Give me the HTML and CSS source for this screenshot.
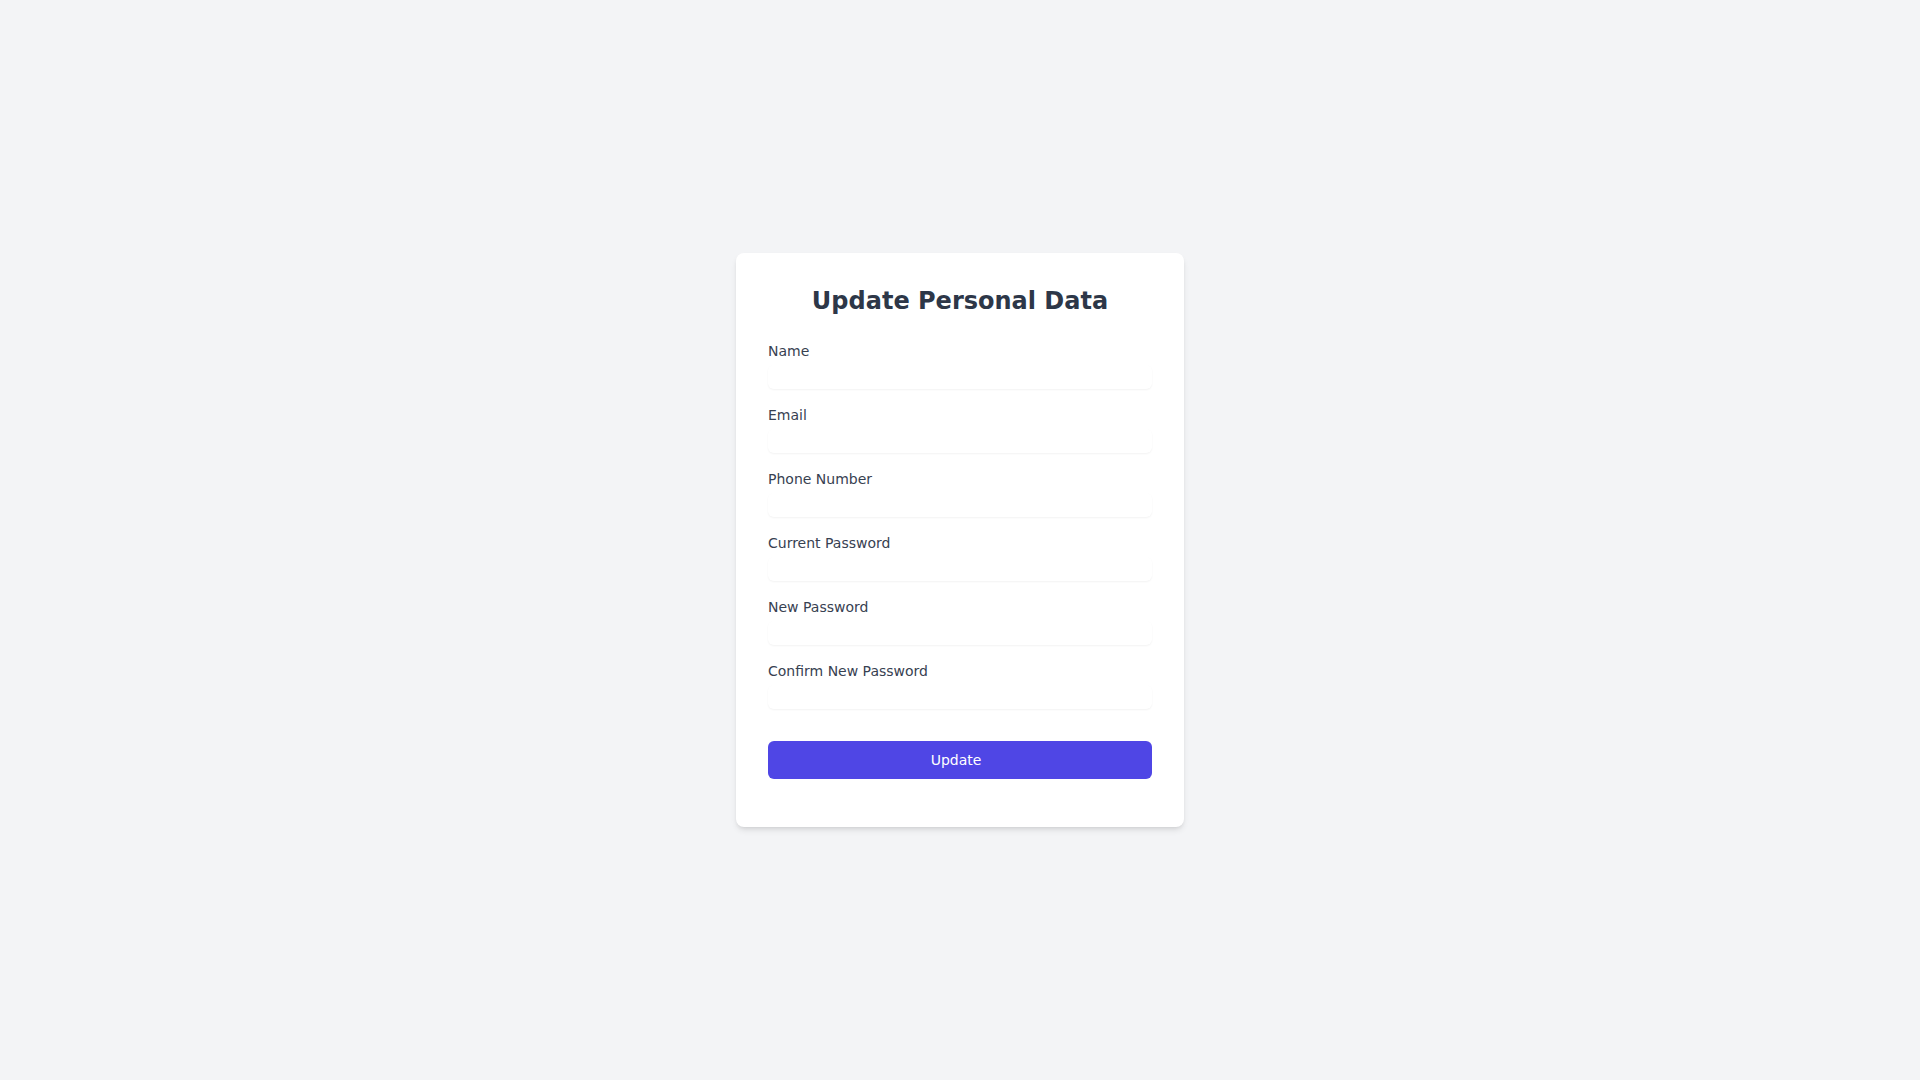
FILE: index.html
```html
<!DOCTYPE html>
<html lang="en">
<head>
<meta charset="utf-8">
<title>Update Personal Data</title>
<link rel="stylesheet" href="styles.css">
</head>
<body>
<main class="page">
  <form class="card">
    <h1 class="title">Update Personal Data</h1>
    <div class="field">
      <label class="label" for="name">Name</label>
      <input class="input" id="name" type="text">
    </div>
    <div class="field">
      <label class="label" for="email">Email</label>
      <input class="input" id="email" type="email">
    </div>
    <div class="field">
      <label class="label" for="phone">Phone Number</label>
      <input class="input" id="phone" type="tel">
    </div>
    <div class="field">
      <label class="label" for="cur">Current Password</label>
      <input class="input" id="cur" type="password">
    </div>
    <div class="field">
      <label class="label" for="new">New Password</label>
      <input class="input" id="new" type="password">
    </div>
    <div class="field">
      <label class="label" for="conf">Confirm New Password</label>
      <input class="input" id="conf" type="password">
    </div>
    <div class="actions">
      <button class="button" type="button">Update</button>
    </div>
  </form>
</main>
</body>
</html>
```
FILE: styles.css
```css
* { box-sizing: border-box; }
html, body { margin: 0; padding: 0; }
body {
  font-family: "DejaVu Sans", sans-serif;
  background: #f3f4f6;
  line-height: 1.5;
}
.page {
  min-height: 100vh;
  display: flex;
  align-items: center;
  justify-content: center;
}
.card {
  width: 448px;
  background: #ffffff;
  border-radius: 8px;
  box-shadow: 0 4px 6px -1px rgba(0,0,0,0.1), 0 2px 4px -2px rgba(0,0,0,0.1);
  padding: 32px;
}
.title {
  margin: 0 0 24px;
  font-size: 24px;
  line-height: 32px;
  font-weight: 700;
  color: #2d3748;
  text-align: center;
}
.field {
  margin-bottom: 16px;
}
.label {
  display: block;
  font-size: 14px;
  line-height: 20px;
  color: #374151;
}
.input {
  display: block;
  width: 100%;
  margin-top: 4px;
  height: 24px;
  padding: 0;
  border: 0;
  border-radius: 6px;
  background: #fff;
  font: inherit;
  font-size: 16px;
  box-shadow: 0 1px 2px 0 rgba(0,0,0,0.05);
  outline: none;
}
.actions {
  margin-top: 32px;
  margin-bottom: 16px;
}
.button {
  display: block;
  width: 100%;
  height: 38px;
  padding: 0 8px 0 0;
  border: 0;
  border-radius: 6px;
  background: #4f46e5;
  color: #ffffff;
  font-family: "DejaVu Sans", sans-serif;
  font-size: 14px;
  line-height: 20px;
  cursor: pointer;
}
```
